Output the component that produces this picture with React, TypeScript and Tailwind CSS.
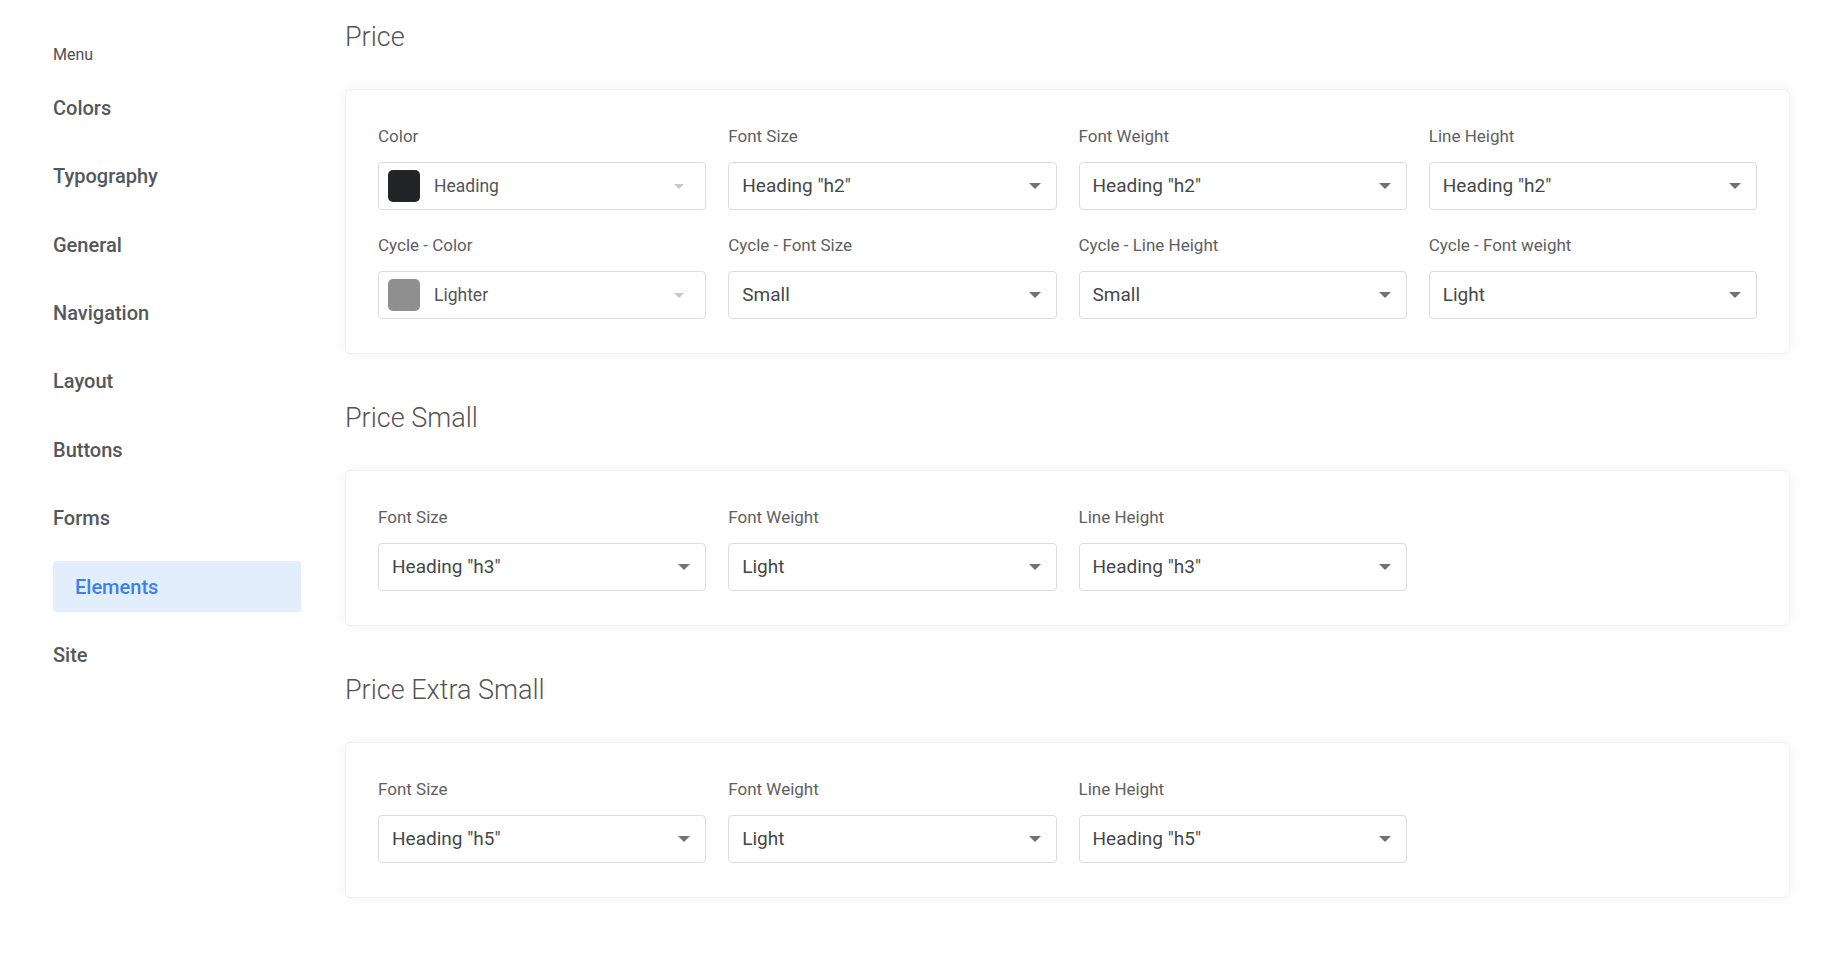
import React from "react";

type Field = {
  label: string;
  value: string;
  swatch?: "dark" | "light";
};

type Section = {
  title: string;
  fields: Field[];
};

const menuItems = [
  "Colors",
  "Typography",
  "General",
  "Navigation",
  "Layout",
  "Buttons",
  "Forms",
  "Elements",
  "Site",
];

const sections: Section[] = [
  {
    title: "Price",
    fields: [
      { label: "Color", value: "Heading", swatch: "dark" },
      { label: "Font Size", value: 'Heading "h2"' },
      { label: "Font Weight", value: 'Heading "h2"' },
      { label: "Line Height", value: 'Heading "h2"' },
      { label: "Cycle - Color", value: "Lighter", swatch: "light" },
      { label: "Cycle - Font Size", value: "Small" },
      { label: "Cycle - Line Height", value: "Small" },
      { label: "Cycle - Font weight", value: "Light" },
    ],
  },
  {
    title: "Price Small",
    fields: [
      { label: "Font Size", value: 'Heading "h3"' },
      { label: "Font Weight", value: "Light" },
      { label: "Line Height", value: 'Heading "h3"' },
    ],
  },
  {
    title: "Price Extra Small",
    fields: [
      { label: "Font Size", value: 'Heading "h5"' },
      { label: "Font Weight", value: "Light" },
      { label: "Line Height", value: 'Heading "h5"' },
    ],
  },
];

const Caret: React.FC<{ light?: boolean }> = ({ light }) =>
  light ? (
    <svg width="10" height="5" viewBox="0 0 10 5" className="shrink-0">
      <path d="M0 0h10L5 5z" fill="#c9c9c9" />
    </svg>
  ) : (
    <svg width="12" height="6" viewBox="0 0 12 6" className="shrink-0">
      <path d="M0 0h12L6 6z" fill="#727272" />
    </svg>
  );

const SelectField: React.FC<Field> = ({ label, value, swatch }) => {
  return (
    <div className="flex flex-col">
      <div className="h-[20px] leading-[20px] text-[17px] text-[#606060]">
        {label}
      </div>
      <div className="mt-[16px] h-[48px] rounded-[4px] border border-[#dcdcdc] bg-white flex items-center">
        {swatch ? (
          <>
            <div
              className={
                swatch === "dark"
                  ? "ml-[9px] w-[32px] h-[32px] rounded-[5px] bg-[#232428]"
                  : "ml-[9px] w-[32px] h-[32px] rounded-[5px] bg-[#8f8f8f]"
              }
            />
            <span className="ml-[14px] flex-1 text-[17.5px] text-[#555555]">
              {value}
            </span>
            <span className="mr-[21px]">
              <Caret light />
            </span>
          </>
        ) : (
          <>
            <span className="ml-[13px] flex-1 text-[19px] text-[#474747]">
              {value}
            </span>
            <span className="mr-[15px]">
              <Caret />
            </span>
          </>
        )}
      </div>
    </div>
  );
};

const App: React.FC = () => {
  return (
    <div className="flex min-h-[956px] w-full bg-white font-['Roboto',sans-serif]">
      <aside className="w-[301px] shrink-0 pl-[53px] pt-[45px]">
        <div className="flex flex-col gap-[17.4px]">
          <div className="h-[20px] leading-[20px] text-[16px] text-[#505050]">
            Menu
          </div>
          {menuItems.map((item) =>
            item === "Elements" ? (
              <div
                key={item}
                className="h-[51px] rounded-[3px] bg-[#e3eefd] pl-[22px] flex items-center text-[20px] font-medium text-[#3b7ff3]"
              >
                {item}
              </div>
            ) : (
              <div
                key={item}
                className="h-[51px] flex items-center text-[20px] font-medium text-[#54575c]"
              >
                {item}
              </div>
            )
          )}
        </div>
      </aside>

      <main className="flex-1 pl-[44px] pr-[50px] pt-[19px] pb-[60px]">
        <div className="flex flex-col gap-[46px]">
          {sections.map((section) => (
            <section key={section.title}>
              <h2 className="h-[36px] leading-[36px] text-[27px] font-light text-[#555555]">
                {section.title}
              </h2>
              <div className="mt-[34px] rounded-[6px] border border-[#f0f0f0] bg-white px-[32px] pt-[36px] pb-[34px] shadow-[0_0_14px_rgba(0,0,0,0.06)]">
                <div className="grid grid-cols-4 gap-x-[22px] gap-y-[25px]">
                  {section.fields.map((field, i) => (
                    <SelectField key={`${section.title}-${i}`} {...field} />
                  ))}
                </div>
              </div>
            </section>
          ))}
        </div>
      </main>
    </div>
  );
};

export default App;
